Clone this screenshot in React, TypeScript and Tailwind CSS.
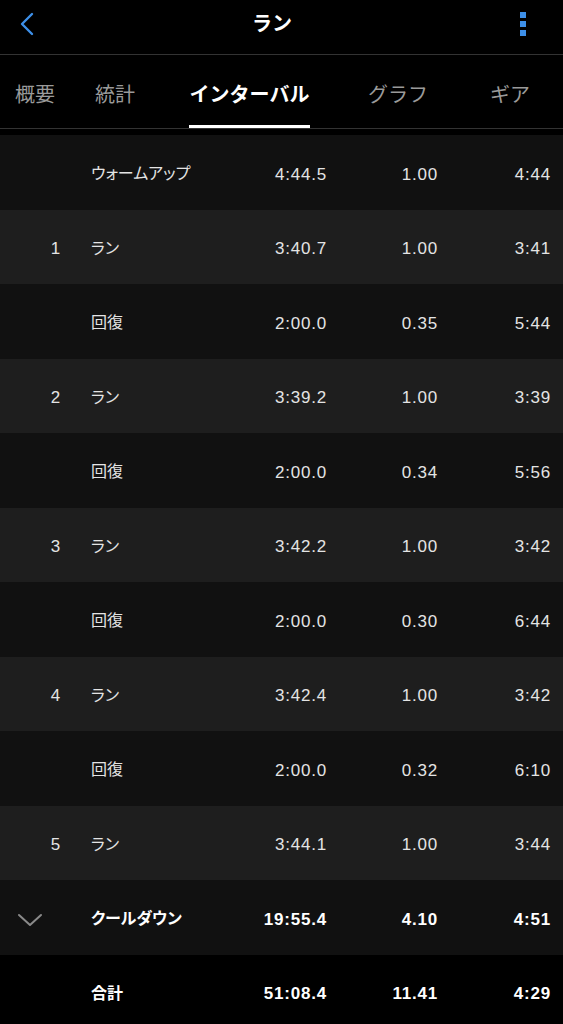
import React from "react";

const rows = [
  { n: "", label: "ウォームアップ", time: "4:44.5", dist: "1.00", pace: "4:44" },
  { n: "1", label: "ラン", time: "3:40.7", dist: "1.00", pace: "3:41" },
  { n: "", label: "回復", time: "2:00.0", dist: "0.35", pace: "5:44" },
  { n: "2", label: "ラン", time: "3:39.2", dist: "1.00", pace: "3:39" },
  { n: "", label: "回復", time: "2:00.0", dist: "0.34", pace: "5:56" },
  { n: "3", label: "ラン", time: "3:42.2", dist: "1.00", pace: "3:42" },
  { n: "", label: "回復", time: "2:00.0", dist: "0.30", pace: "6:44" },
  { n: "4", label: "ラン", time: "3:42.4", dist: "1.00", pace: "3:42" },
  { n: "", label: "回復", time: "2:00.0", dist: "0.32", pace: "6:10" },
  { n: "5", label: "ラン", time: "3:44.1", dist: "1.00", pace: "3:44" },
];

const font = { fontFamily: '"Liberation Sans", "Noto Sans CJK JP", sans-serif' };

export default function App() {
  return (
    <div className="bg-black min-h-screen w-[563px] text-[#e4e4e4] overflow-hidden" style={font}>
      {/* header */}
      <div className="h-[55px] flex items-center px-[18px] border-b border-[#333] pb-[6px]">
        <div className="flex-1">
          <svg width="18" height="24" viewBox="0 0 18 24" fill="none">
            <path d="M14 2 L4 12 L14 22" stroke="#3d8fe8" strokeWidth="2.4" strokeLinecap="round" strokeLinejoin="round" />
          </svg>
        </div>
        <div className="text-white text-[20px] font-bold">ラン</div>
        <div className="flex-1 flex justify-end pr-[19px]">
          <div className="flex flex-col gap-[3px]">
            <span className="w-[6px] h-[6px] bg-[#3d8fe8]" />
            <span className="w-[6px] h-[6px] bg-[#3d8fe8]" />
            <span className="w-[6px] h-[6px] bg-[#3d8fe8]" />
          </div>
        </div>
      </div>

      {/* tabs */}
      <div className="h-[74px] flex items-stretch border-b border-[#333] text-[20px] text-[#9a9a9a] pt-[6px]">
        <div className="pl-[15px] w-[95px] flex items-center">概要</div>
        <div className="w-[94px] flex items-center">統計</div>
        <div className="relative w-[121px] flex items-center justify-center text-white font-bold">
          インターバル
          <span className="absolute bottom-0 left-0 right-0 h-[3px] bg-white" />
        </div>
        <div className="w-[58px]" />
        <div className="w-[122px] flex items-center">グラフ</div>
        <div className="flex items-center">ギア</div>
      </div>

      <div className="h-[6px]" />

      {/* interval rows */}
      {rows.map((r, i) => (
        <Row key={i} {...r} bg={i % 2 === 0 ? "bg-[#111111]" : "bg-[#1e1e1e]"} />
      ))}
      <Row
        n=""
        label="クールダウン"
        time="19:55.4"
        dist="4.10"
        pace="4:51"
        bg="bg-[#111111]"
        bold
        chevron
      />
      <Row n="" label="合計" time="51:08.4" dist="11.41" pace="4:29" bg="bg-black" bold />
    </div>
  );
}

function Row({ n, label, time, dist, pace, bg, bold, chevron }: any) {
  return (
    <div className={`${bg} h-[74.5px] flex items-center pt-[4px] text-[17px] tracking-[0.8px] ${bold ? "font-bold text-white" : ""}`}>
      <div className="w-[61px] flex justify-end items-center">
        {chevron ? (
          <svg width="26" height="16" viewBox="0 0 26 16" fill="none" className="mr-[18px] mt-[2px]">
            <path d="M2 3 L13 13 L24 3" stroke="#8a8a8a" strokeWidth="2" strokeLinecap="round" strokeLinejoin="round" />
          </svg>
        ) : (
          n
        )}
      </div>
      <div className="w-[30px]" />
      <div className="w-[120px] text-[16px] tracking-normal [font-feature-settings:'palt']">{label}</div>
      <div className="w-[116px] text-right">{time}</div>
      <div className="w-[111px] text-right">{dist}</div>
      <div className="w-[113px] text-right">{pace}</div>
    </div>
  );
}
